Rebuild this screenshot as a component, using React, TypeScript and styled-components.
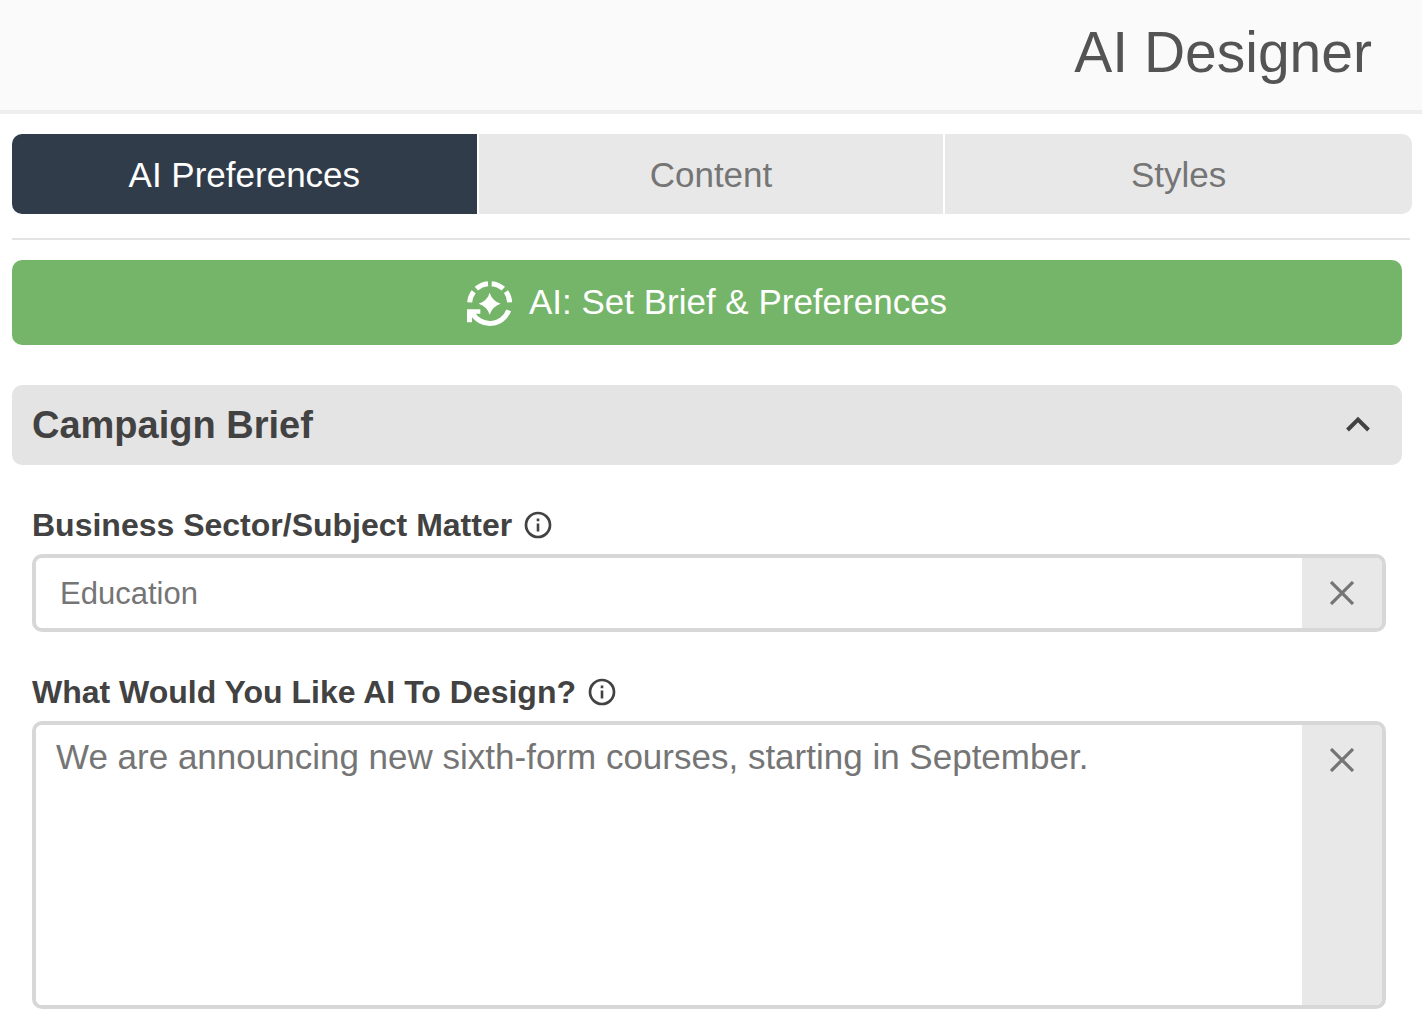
import React, { useState } from "react";
import styled, { createGlobalStyle } from "styled-components";

const GlobalStyle = createGlobalStyle`
  * { box-sizing: border-box; }
  body {
    margin: 0;
    background: #fff;
    color: #424242;
    font-family: "Liberation Sans", Arial, sans-serif;
  }
  button, input, textarea { font: inherit; color: inherit; }
`;

const Header = styled.header`
  display: flex;
  justify-content: flex-end;
  align-items: center;
  height: 114px;
  padding: 0 50px 6px 12px;
  background: #fafafa;
  border-bottom: 4px solid #eee;
`;

const Title = styled.h1`
  margin: 0;
  font-size: 57px;
  line-height: 64px;
  font-weight: 400;
  color: #545454;
`;

const Main = styled.main`
  padding: 20px 20px 23px 12px;
`;

const Tabs = styled.div`
  display: grid;
  grid-template-columns: repeat(3, 1fr);
  gap: 2px;
  margin-right: -8px;
`;

const Tab = styled.button<{ $active: boolean }>`
  height: 80px;
  padding: 2px 0 0;
  border: 0;
  font-size: 35px;
  line-height: 40px;
  color: ${(p) => (p.$active ? "#fff" : "#757575")};
  background: ${(p) => (p.$active ? "#313c4a" : "#e8e8e8")};

  &:first-child {
    border-radius: 10px 0 0 10px;
  }

  &:last-child {
    margin-right: -2px;
    border-radius: 0 10px 10px 0;
  }
`;

const Rule = styled.hr`
  height: 2px;
  margin: 24px -8px 20px 0;
  border: 0;
  background: #e4e4e4;
`;

const PrimaryButton = styled.button`
  display: flex;
  justify-content: center;
  align-items: center;
  gap: 16px;
  width: 100%;
  height: 85px;
  padding: 2px 0 0;
  border: 0;
  border-radius: 10px;
  background: #75b569;
  color: #fff;
  font-size: 35px;
  line-height: 40px;
`;

const ButtonText = styled.span`
  padding-bottom: 4px;
`;

const SectionToggle = styled.button`
  display: flex;
  justify-content: space-between;
  align-items: center;
  width: 100%;
  height: 80px;
  margin-top: 40px;
  padding: 0 32px 0 20px;
  border: 0;
  border-radius: 10px;
  background: #e4e4e4;
  font-size: 38px;
  line-height: 40px;
  font-weight: 700;
`;

const Fields = styled.div`
  display: grid;
  gap: 40px;
  padding: 40px 16px 0 20px;
`;

const LabelRow = styled.div`
  display: flex;
  align-items: center;
  gap: 12px;
  height: 40px;
  margin-bottom: 9px;
`;

const Label = styled.label`
  font-size: 32px;
  line-height: 40px;
  font-weight: 700;
`;

const InfoButton = styled.button`
  display: flex;
  padding: 0;
  border: 0;
  background: none;
`;

const InputGroup = styled.div`
  display: flex;
  border: 4px solid #d7d7d7;
  border-radius: 10px;
  overflow: hidden;
`;

const TextInput = styled.input`
  flex: 1;
  min-width: 0;
  height: 70px;
  padding: 2px 24px 0;
  border: 0;
  outline: 0;
  background: #fff;
  font-size: 31px;
  color: #757575;
`;

const TextArea = styled.textarea`
  flex: 1;
  min-width: 0;
  height: 280px;
  padding: 12px 20px;
  border: 0;
  outline: 0;
  resize: none;
  background: #fff;
  font-size: 35px;
  line-height: 40px;
  color: #757575;
`;

const ClearButton = styled.button`
  display: flex;
  justify-content: center;
  align-items: flex-start;
  width: 80px;
  padding: 23px 0;
  border: 0;
  background: #e8e8e8;
`;

const AiCycleIcon = () => (
  <svg width="46" height="46" viewBox="0 0 138 138" fill="none" aria-hidden="true">
    <g stroke="#fff" strokeWidth="15">
      <path d="M8 64A60 60 0 0 1 20 32" />
      <path d="M28 23A60 60 0 0 1 63 8" />
      <path d="M74 8A60 60 0 0 1 109 23" />
      <path d="M117 32A60 60 0 0 1 128 64" />
      <path d="M125 88A60 60 0 0 1 16 96" />
    </g>
    <path d="M0 85H40V98H26L15 110V124H0Z" fill="#fff" />
    <path d="M68 35Q76 60 101 68Q76 76 68 101Q60 76 35 68Q60 60 68 35Z" fill="#fff" />
  </svg>
);

const InfoIcon = () => (
  <svg width="28" height="28" viewBox="0 0 28 28" fill="none" stroke="#424242" aria-hidden="true">
    <circle cx="14" cy="14" r="12" strokeWidth="2.7" />
    <path d="M14 12.5V20.5M14 7.5V10.3" strokeWidth="2.6" />
  </svg>
);

const ChevronIcon = () => (
  <svg width="24" height="18" viewBox="0 0 24 18" fill="none" stroke="#424242" strokeWidth="4" aria-hidden="true">
    <path d="M1.500 14L12 3.500L22.500 14" />
  </svg>
);

const CrossIcon = () => (
  <svg width="24" height="24" viewBox="0 0 24 24" fill="none" stroke="#757575" strokeWidth="3.200" aria-hidden="true">
    <path d="M1 1L23 23M23 1L1 23" />
  </svg>
);

const TAB_NAMES = ["AI Preferences", "Content", "Styles"];

type FieldHeadProps = { id: string; children: string };

const FieldHead = ({ id, children }: FieldHeadProps) => (
  <LabelRow>
    <Label htmlFor={id}>{children}</Label>
    <InfoButton type="button" aria-label={`About ${children}`}>
      <InfoIcon />
    </InfoButton>
  </LabelRow>
);

export default function App() {
  const [tab, setTab] = useState(0);
  const [open, setOpen] = useState(true);
  const [sector, setSector] = useState("Education");
  const [brief, setBrief] = useState("We are announcing new sixth-form courses, starting in September.");

  return (
    <>
      <GlobalStyle />
      <Header>
        <Title>AI Designer</Title>
      </Header>
      <Main>
        <Tabs role="tablist">
          {TAB_NAMES.map((name, i) => (
            <Tab key={name} type="button" role="tab" aria-selected={tab === i} $active={tab === i} onClick={() => setTab(i)}>
              {name}
            </Tab>
          ))}
        </Tabs>
        <Rule />
        <PrimaryButton type="button">
          <AiCycleIcon />
          <ButtonText>AI: Set Brief &amp; Preferences</ButtonText>
        </PrimaryButton>
        <SectionToggle type="button" aria-expanded={open} onClick={() => setOpen(!open)}>
          Campaign Brief
          <ChevronIcon />
        </SectionToggle>
        {open && (
          <Fields>
            <div>
              <FieldHead id="sector">Business Sector/Subject Matter</FieldHead>
              <InputGroup>
                <TextInput id="sector" value={sector} onChange={(e) => setSector(e.target.value)} />
                <ClearButton type="button" aria-label="Clear sector" onClick={() => setSector("")}>
                  <CrossIcon />
                </ClearButton>
              </InputGroup>
            </div>
            <div>
              <FieldHead id="brief">What Would You Like AI To Design?</FieldHead>
              <InputGroup>
                <TextArea id="brief" value={brief} onChange={(e) => setBrief(e.target.value)} />
                <ClearButton type="button" aria-label="Clear design brief" onClick={() => setBrief("")}>
                  <CrossIcon />
                </ClearButton>
              </InputGroup>
            </div>
          </Fields>
        )}
      </Main>
    </>
  );
}
